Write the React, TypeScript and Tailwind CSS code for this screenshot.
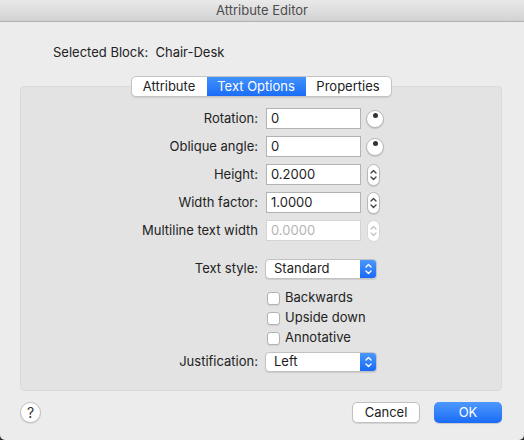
import React from 'react';

const font = { fontFamily: 'Inter, "Liberation Sans", sans-serif' };

function Dial() {
  return (
    <div className="relative ml-[5px] h-[18px] w-[18px] rounded-full border border-[#b8b8b8] bg-white shadow-[0_1px_1px_rgba(0,0,0,0.15)]">
      <div className="absolute left-[6px] top-[2px] h-[5px] w-[5px] rounded-full bg-[#333]" />
    </div>
  );
}

function Stepper({ disabled = false }: { disabled?: boolean }) {
  const c = disabled ? '#c4c4c4' : '#444';
  return (
    <div
      className={`ml-[6px] flex h-[22px] w-[13px] items-center justify-center rounded-full border bg-white ${
        disabled ? 'border-[#d6d6d6]' : 'border-[#b8b8b8] shadow-[0_1px_1px_rgba(0,0,0,0.12)]'
      }`}
    >
      <svg width="7" height="14" viewBox="0 0 7 14" fill="none" stroke={c} strokeWidth="1.4" strokeLinecap="round" strokeLinejoin="round">
        <path d="M1 5 L3.5 2.5 L6 5" />
        <path d="M1 9 L3.5 11.5 L6 9" />
      </svg>
    </div>
  );
}

function Field({ label, value, disabled = false, adorn }: { label: string; value: string; disabled?: boolean; adorn: React.ReactNode }) {
  return (
    <div className="flex h-[21px] items-center">
      <div className="w-[237px] text-right text-[13px] text-[#222]">{label}</div>
      <div
        className={`ml-[8px] flex h-[21px] w-[95px] items-center border bg-white pl-[4px] text-[13px] ${
          disabled ? 'border-[#d4d4d4] text-[#b4b4b4]' : 'border-[#b3b3b3] text-[#1e1e1e]'
        }`}
      >
        {value}
      </div>
      {adorn}
    </div>
  );
}

function Popup({ label, value }: { label: string; value: string }) {
  return (
    <div className="flex h-[21px] items-center">
      <div className="w-[237px] text-right text-[13px] text-[#222]">{label}</div>
      <div className="ml-[7px] flex h-[20px] w-[112px] items-center overflow-hidden rounded-[4px] border border-[#c2c2c2] bg-white shadow-[0_1px_1px_rgba(0,0,0,0.1)]">
        <div className="flex-1 pl-[8px] text-[13px] text-[#1e1e1e]">{value}</div>
        <div className="flex h-full w-[16px] items-center justify-center bg-gradient-to-b from-[#4a97fd] to-[#1769f6]">
          <svg width="7" height="12" viewBox="0 0 7 12" fill="none" stroke="#fff" strokeWidth="1.4" strokeLinecap="round" strokeLinejoin="round">
            <path d="M1 4 L3.5 1.5 L6 4" />
            <path d="M1 8 L3.5 10.5 L6 8" />
          </svg>
        </div>
      </div>
    </div>
  );
}

function Check({ label }: { label: string }) {
  return (
    <div className="flex h-[20px] items-center pl-[246px]">
      <div className="h-[13px] w-[13px] rounded-[3px] border border-[#b3b3b3] bg-white shadow-[0_1px_1px_rgba(0,0,0,0.08)]" />
      <span className="ml-[5px] text-[13px] text-[#222]">{label}</span>
    </div>
  );
}

export default function App() {
  return (
    <div className="h-[440px] w-[524px] bg-[#2a2a2a]" style={font}>
      <div className="flex h-full flex-col overflow-hidden rounded-b-[5px] bg-[#ececec]">
        <div className="flex h-[22px] items-center justify-center border-b border-[#b1b1b1] bg-gradient-to-b from-[#e9e9e9] to-[#d2d2d2] text-[13px] text-[#4c4c4c]">
          Attribute Editor
        </div>

        <div className="flex flex-1 flex-col pl-[20px] pr-[22px]">
          <div className="mt-[22px] pl-[33px] text-[13px] leading-[16px] text-[#222]">
            Selected Block:&nbsp; Chair-Desk
          </div>

          <div className="relative z-10 mt-[16px] -mb-[11px] flex justify-center">
            <div className="flex h-[21px] overflow-hidden rounded-[5px] border border-[#c4c4c4] bg-white text-[13px] shadow-[0_1px_1px_rgba(0,0,0,0.1)]">
              <div className="flex w-[75px] items-center justify-center text-[#222]">Attribute</div>
              <div className="flex w-[99px] items-center justify-center bg-gradient-to-b from-[#4192fd] to-[#1a6cf7] text-white">Text Options</div>
              <div className="flex w-[85px] items-center justify-center text-[#222]">Properties</div>
            </div>
          </div>

          <div className="flex h-[305px] flex-col rounded-[4px] border border-[#d9d9d9] bg-[#e3e3e3] pt-[21px]">
            <div className="flex flex-col gap-[7px]">
              <Field label="Rotation:" value="0" adorn={<Dial />} />
              <Field label="Oblique angle:" value="0" adorn={<Dial />} />
              <Field label="Height:" value="0.2000" adorn={<Stepper />} />
              <Field label="Width factor:" value="1.0000" adorn={<Stepper />} />
              <Field label="Multiline text width" value="0.0000" disabled adorn={<Stepper disabled />} />
            </div>
            <div className="mt-[17px]">
              <Popup label="Text style:" value="Standard" />
            </div>
            <div className="mt-[9px] flex flex-col">
              <Check label="Backwards" />
              <Check label="Upside down" />
              <Check label="Annotative" />
            </div>
            <div className="mt-[3px]">
              <Popup label="Justification:" value="Left" />
            </div>
          </div>

          <div className="mt-[11px] flex items-center">
            <div className="flex h-[21px] w-[21px] items-center justify-center rounded-full border border-[#c0c0c0] bg-white text-[14px] text-[#333] shadow-[0_1px_1px_rgba(0,0,0,0.1)]">
              ?
            </div>
            <div className="flex-1" />
            <div className="flex h-[21px] w-[68px] items-center justify-center rounded-[5px] border border-[#c0c0c0] bg-white text-[13px] text-[#222] shadow-[0_1px_1px_rgba(0,0,0,0.1)]">
              Cancel
            </div>
            <div className="ml-[14px] flex h-[21px] w-[68px] items-center justify-center rounded-[5px] bg-gradient-to-b from-[#4d98fd] to-[#1a6bf6] text-[13px] text-white shadow-[0_1px_1px_rgba(0,0,0,0.15)]">
              OK
            </div>
          </div>
        </div>
      </div>
    </div>
  );
}
